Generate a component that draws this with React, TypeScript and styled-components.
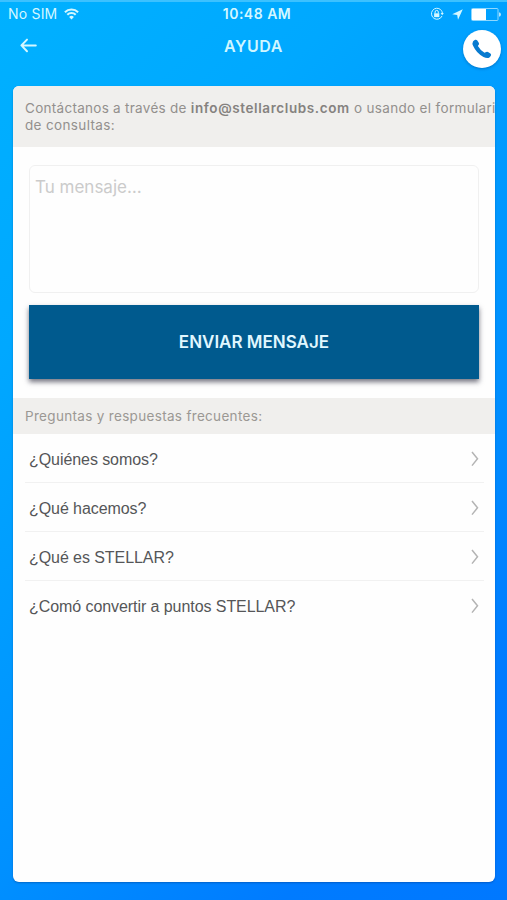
import React from "react";
import styled, { createGlobalStyle } from "styled-components";

const GlobalStyle = createGlobalStyle`
  * { box-sizing: border-box; }
  body { margin: 0; }
`;

const Screen = styled.main`
  width: 507px;
  height: 900px;
  overflow: hidden;
  display: flex;
  flex-direction: column;
  border-top: 2px solid #3cc1ff;
  background: linear-gradient(135deg, #00b1ff 0%, #00a8ff 25%, #0090ff 62%, #007bff 84%, #0078ff 100%);
  font-family: Inter, sans-serif;
`;

const StatusBar = styled.div`
  height: 24px;
  flex: none;
  display: grid;
  grid-template-columns: 1fr auto 1fr;
  align-items: center;
  padding: 0 6px 0 8px;
  color: #d4f7ff;
  font-size: 14px;
  line-height: 24px;
`;

const StatusGroup = styled.div<{ $end?: boolean }>`
  display: flex;
  align-items: center;
  justify-content: ${(p) => (p.$end ? "flex-end" : "flex-start")};
  gap: ${(p) => (p.$end ? 8 : 7)}px;
`;

const Carrier = styled.span`
  letter-spacing: 0.2px;
`;

const Clock = styled.time`
  padding-left: 5px;
  font-weight: 600;
  font-size: 14px;
  letter-spacing: 0.5px;
`;

const NavBar = styled.header`
  height: 60px;
  flex: none;
  display: grid;
  grid-template-columns: 60px 1fr 60px;
  align-items: start;
  padding-top: 4px;
`;

const BackButton = styled.button`
  border: 0;
  background: none;
  padding: 7px 0 0 19px;
  height: 34px;
  display: flex;
  color: #d4f7ff;
`;

const Title = styled.h1`
  margin: 0;
  text-align: center;
  font-size: 16px;
  font-weight: 600;
  line-height: 33px;
  letter-spacing: 0.6px;
  color: #d0f6ff;
`;

const CallButton = styled.button`
  justify-self: end;
  width: 38px;
  height: 38px;
  margin-right: 6px;
  padding: 0;
  border: 0;
  border-radius: 50%;
  background: #fff;
  box-shadow: 0 1px 3px rgba(0, 40, 100, 0.35);
  display: flex;
  align-items: center;
  justify-content: center;
`;

const Card = styled.section`
  width: 482px;
  height: 796px;
  margin-left: 13px;
  flex: none;
  overflow: hidden;
  border-radius: 6px;
  background: #fefefe;
  box-shadow: 0 1px 2px rgba(0, 50, 120, 0.4);
`;

const Intro = styled.p`
  margin: 0;
  height: 61px;
  padding: 14px 0 0 12px;
  background: #f0efed;
  color: #93908d;
  font-size: 13.5px;
  line-height: 17px;
  white-space: nowrap;
`;

const Run = styled.span<{ $track: number }>`
  letter-spacing: ${(p) => p.$track}px;
`;

const Email = styled.strong`
  font-weight: 600;
  letter-spacing: 0.6px;
  color: #85827f;
`;

const Form = styled.form`
  height: 251px;
  padding: 18px 16px 0;
`;

const Message = styled.textarea`
  display: block;
  width: 450px;
  height: 128px;
  padding: 9px 5px;
  border: 1px solid #f0f0f0;
  border-radius: 6px;
  background: #fefefe;
  resize: none;
  outline: none;
  font: 400 17px/24px Inter, sans-serif;
  letter-spacing: 0;
  &::placeholder { color: #cbcbcb; opacity: 1; }
`;

const SendButton = styled.button`
  display: block;
  width: 450px;
  height: 74px;
  margin-top: 12px;
  padding: 0;
  border: 0;
  background: #005a8e;
  box-shadow: 0 3px 5px rgba(25, 25, 45, 0.6);
  color: #e0f7ff;
  font: 600 17px Inter, sans-serif;
  letter-spacing: 0;
`;

const SectionHeading = styled.h2`
  margin: 0;
  height: 36px;
  padding-left: 12px;
  background: #f0efed;
  color: #9b9894;
  font-size: 13.5px;
  font-weight: 400;
  line-height: 37px;
  letter-spacing: 0.32px;
`;

const QuestionList = styled.ul`
  list-style: none;
  margin: 0;
  padding: 0 11px 0 12px;
`;

const Question = styled.li`
  height: 49px;
  padding: 2px 4px 0 4px;
  display: flex;
  align-items: center;
  justify-content: space-between;
  border-bottom: 1px solid #f1f1f1;
  color: #555658;
  &:last-child { border-bottom-color: transparent; }
`;

const QuestionText = styled.span`
  padding-top: 2px;
  font: 400 16px "Liberation Sans", sans-serif;
  letter-spacing: -0.07px;
`;

const questions = [
  "¿Quiénes somos?",
  "¿Qué hacemos?",
  "¿Qué es STELLAR?",
  "¿Comó convertir a puntos STELLAR?",
];

const WifiIcon = () => (
  <svg width="15" height="12" viewBox="0 0 15 12" fill="none" stroke="currentColor" strokeWidth="2">
    <path d="M.9 4.2a9.3 9.3 0 0 1 13.2 0M3.3 6.8a5.9 5.9 0 0 1 8.4 0" />
    <path d="M7.5 11.4 5.1 8.9a3.4 3.4 0 0 1 4.8 0Z" fill="currentColor" stroke="none" />
  </svg>
);

const RotationLockIcon = () => (
  <svg width="14" height="14" viewBox="0 0 14 14" fill="none" stroke="currentColor" strokeWidth="1">
    <path d="M12 9A5.5 5.5 0 1 1 10.8 2.8M11.2 3.2a5.5 5.5 0 0 1 1.2 3.2" />
    <path d="M10.6 6h3.2l-1.6 2.2Z" fill="currentColor" stroke="none" />
    <rect x="4.1" y="6.3" width="5.2" height="3.8" fill="currentColor" stroke="none" />
    <path d="M5.1 6.5V5a1.6 1.6 0 0 1 3.2 0v1.5" />
  </svg>
);

const LocationIcon = () => (
  <svg width="11" height="11" viewBox="0 0 11 11" fill="currentColor">
    <path d="M10.8.2.2 5.2l5 .7.8 4.9Z" />
  </svg>
);

const BatteryIcon = () => (
  <svg width="30" height="13" viewBox="0 0 30 13">
    <rect x=".5" y=".5" width="26.5" height="12" rx="1" fill="none" stroke="#8ed8ff" />
    <path d="M1 1h14v11H1Z" fill="#fff" />
    <path d="M28 4.3q2 .5 2 2.2t-2 2.2Z" fill="#b4e6ff" />
  </svg>
);

const ArrowIcon = () => (
  <svg width="20" height="16" viewBox="0 0 20 16" fill="none" stroke="currentColor" strokeWidth="2">
    <path d="M16.8 8.4H2.6M8 2.6 2.4 8.4 8 14.2" strokeLinecap="round" strokeLinejoin="round" />
  </svg>
);

const PhoneIcon = () => (
  <svg width="22" height="22" viewBox="0 0 22 22">
    <path
      d="M2 3.4C3.4 1.7 5.2 1.2 6.3 2.4L7.9 4.9Q8.5 6.2 7.3 7.2L6.9 8.1Q9.3 12.5 13.5 14.7L14.6 14.3Q15.7 13.2 17 13.9L19.4 15.5C20.9 16.8 19.7 18.2 18.4 19.4C17.1 20.4 14.8 20.1 12.5 18.9Q5.5 15.3 2.2 8Q.9 5.1 2 3.4Z"
      fill="#087bd0"
    />
  </svg>
);

const ChevronIcon = () => (
  <svg width="10" height="16" viewBox="0 0 10 16" fill="none" stroke="#b4b4b4" strokeWidth="1.5">
    <path d="M2 1 7.5 7.8 2 14.6" />
  </svg>
);

export default function App() {
  return (
    <Screen>
      <GlobalStyle />
      <StatusBar>
        <StatusGroup>
          <Carrier>No SIM</Carrier>
          <WifiIcon />
        </StatusGroup>
        <Clock>10:48 AM</Clock>
        <StatusGroup $end>
          <RotationLockIcon />
          <LocationIcon />
          <BatteryIcon />
        </StatusGroup>
      </StatusBar>
      <NavBar>
        <BackButton type="button" aria-label="Volver"><ArrowIcon /></BackButton>
        <Title>AYUDA</Title>
        <CallButton type="button" aria-label="Llamar"><PhoneIcon /></CallButton>
      </NavBar>
      <Card>
        <Intro>
          <Run $track={0.28}>Contáctanos a través de </Run>
          <Email>info@stellarclubs.com</Email>
          <Run $track={0.33}> o usando el formulario</Run>
          <br />
          <Run $track={0.35}>de consultas:</Run>
        </Intro>
        <Form onSubmit={(e) => e.preventDefault()}>
          <Message placeholder="Tu mensaje…" />
          <SendButton type="submit">ENVIAR MENSAJE</SendButton>
        </Form>
        <SectionHeading>Preguntas y respuestas frecuentes:</SectionHeading>
        <QuestionList>
          {questions.map((text) => (
            <Question key={text}>
              <QuestionText>{text}</QuestionText>
              <ChevronIcon />
            </Question>
          ))}
        </QuestionList>
      </Card>
    </Screen>
  );
}
